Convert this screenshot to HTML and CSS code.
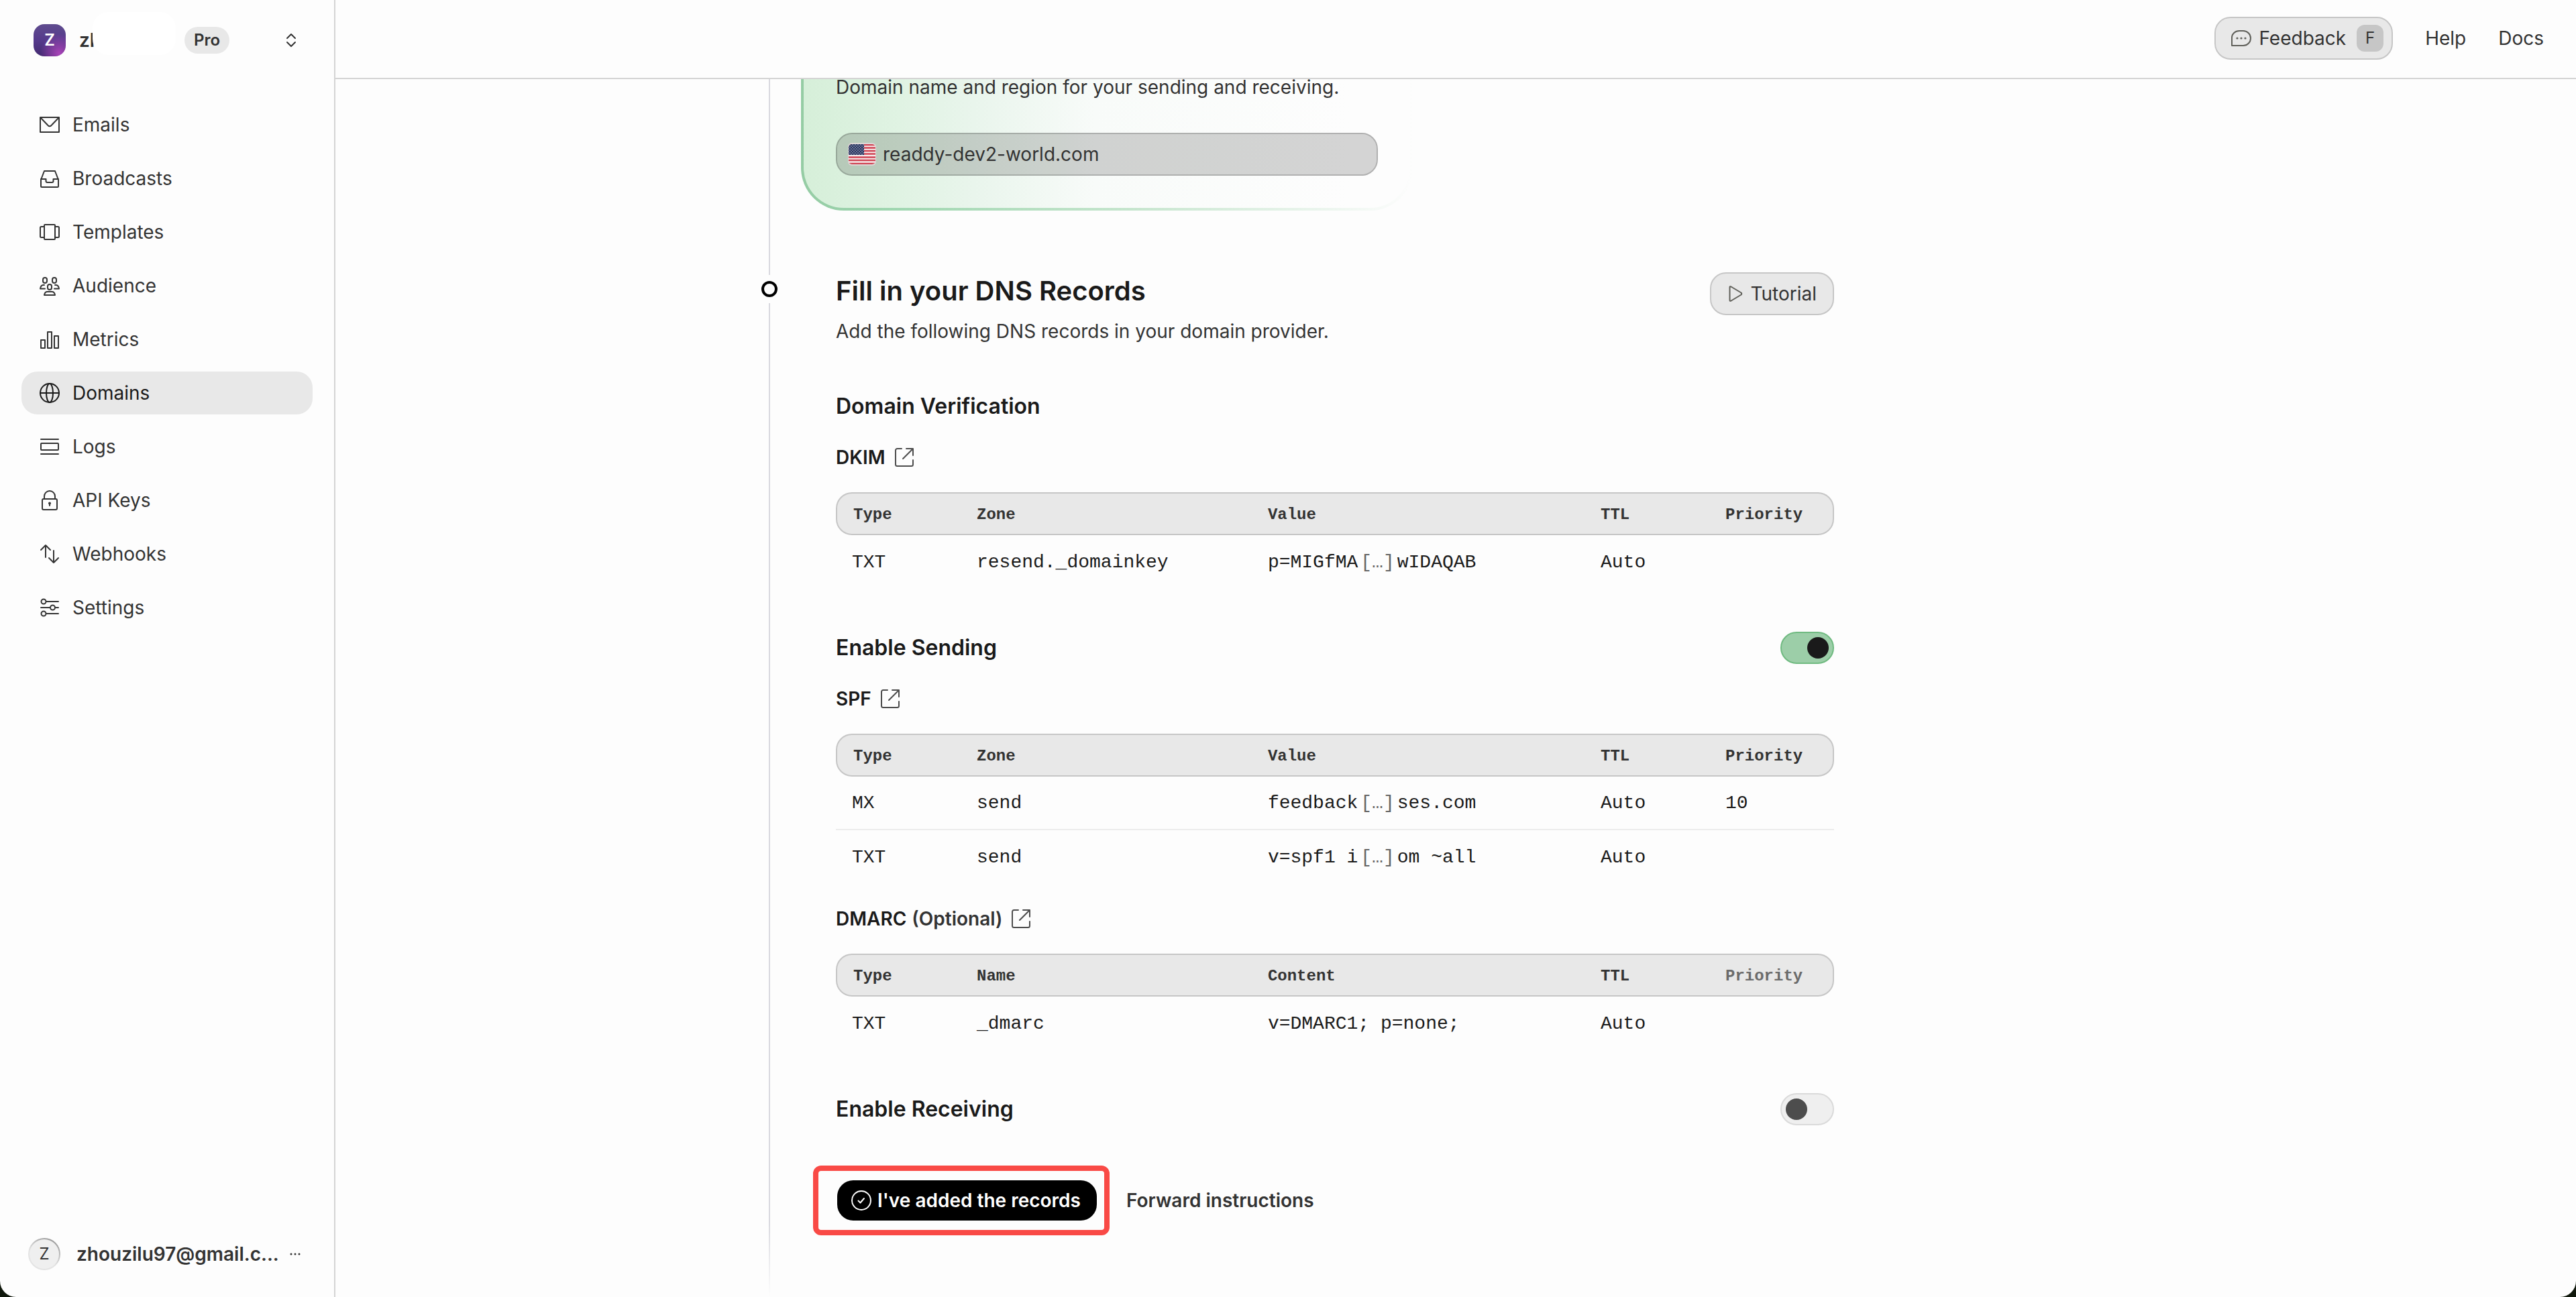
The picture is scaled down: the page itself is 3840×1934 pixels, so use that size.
FILE: index.html
```html
<!DOCTYPE html>
<html lang="en">
<head>
<meta charset="utf-8">
<title>Domains</title>
<link rel="stylesheet" href="styles.css">
</head>
<body>
<svg class="defs" aria-hidden="true">
  <symbol id="external" viewBox="0 0 32 32">
    <path d="M12 3H5.500a2.500 2.500 0 0 0-2.500 2.500v21a2.500 2.500 0 0 0 2.500 2.500h21a2.500 2.500 0 0 0 2.500-2.500V20"/>
    <path d="M19 3h10v10M29 3L14 18"/>
  </symbol>
</svg>
<div class="app">
  <aside class="sidebar">
    <button class="team" type="button">
      <span class="team-avatar">Z</span>
      <span class="team-name">zh<span class="redaction"></span></span>
      <span class="plan">Pro</span>
      <svg class="chevrons" viewBox="0 0 16 24" aria-hidden="true"><path d="M2 9l6-6 6 6M2 15l6 6 6-6"/></svg>
    </button>
    <nav class="nav">
      <a class="nav-item" href="#"><svg class="icon" viewBox="0 0 32 32"><rect x="2" y="5" width="28" height="22"/><path d="M2.500 5.500L13.500 17q2.500 2.500 5 0L29.500 5.500"/></svg>Emails</a>
      <a class="nav-item" href="#"><svg class="icon" viewBox="0 0 32 32"><path d="M8 5h16l5 13v9.500a1.500 1.500 0 0 1-1.500 1.500h-23a1.500 1.500 0 0 1-1.500-1.500V18z"/><path d="M3 17h7.500v3a2 2 0 0 0 2 2h7a2 2 0 0 0 2-2v-3H29"/></svg>Broadcasts</a>
      <a class="nav-item" href="#"><svg class="icon" viewBox="0 0 32 32"><rect x="8" y="5" width="16" height="22" rx="1"/><path d="M8 8H3.500A1.500 1.500 0 0 0 2 9.500v13A1.500 1.500 0 0 0 3.500 24H8M24 8h4.500A1.500 1.500 0 0 1 30 9.500v13a1.500 1.500 0 0 1-1.500 1.500H24"/></svg>Templates</a>
      <a class="nav-item" href="#"><svg class="icon" viewBox="0 0 32 32"><rect x="6" y="4" width="6" height="8" rx="3"/><rect x="20" y="4" width="6" height="8" rx="3"/><rect x="13" y="14" width="6" height="8" rx="3"/><path d="M8 15H6.500C4 15 2.500 17.500 2 20.500h7M24 15h1.500c2.500 0 4 2.500 4.500 5.500h-7M8 30c.5-3 2-5 4.500-5h7c2.500 0 4 2 4.500 5z"/></svg>Audience</a>
      <a class="nav-item" href="#"><svg class="icon" viewBox="0 0 32 32"><rect x="3" y="17" width="6" height="12"/><rect x="13" y="5" width="6" height="24"/><rect x="23" y="11" width="6" height="18"/></svg>Metrics</a>
      <a class="nav-item active" href="#" aria-current="page"><svg class="icon" viewBox="0 0 32 32"><circle cx="16" cy="16" r="14"/><ellipse cx="16" cy="16" rx="5" ry="14"/><path d="M2 16h28"/></svg>Domains</a>
      <a class="nav-item" href="#"><svg class="icon" viewBox="0 0 32 32"><path d="M3 5h26M3 27h26"/><rect x="3" y="11" width="26" height="10" rx="1"/></svg>Logs</a>
      <a class="nav-item" href="#"><svg class="icon" viewBox="0 0 32 32"><rect x="5" y="14" width="22" height="16" rx="2"/><path d="M8 14v-4a8 8 0 0 1 16 0v4M16 20v4"/><circle cx="16" cy="20.500" r="1"/></svg>API Keys</a>
      <a class="nav-item" href="#"><svg class="icon" viewBox="0 0 32 32"><path d="M10 21V3M3 10l7-7 7 7M22 11v18M15 22l7 7 7-7"/></svg>Webhooks</a>
      <a class="nav-item" href="#"><svg class="icon" viewBox="0 0 32 32"><circle cx="7" cy="7" r="3.500"/><circle cx="20.500" cy="16" r="3.500"/><circle cx="7" cy="25" r="3.500"/><path d="M11 7h18M3 16h14M24 16h5M11 25h18"/></svg>Settings</a>
    </nav>
    <button class="account" type="button">
      <span class="account-avatar">Z</span>
      <span class="account-name">zhouzilu97@gmail.c...</span>
      <svg class="dots" viewBox="0 0 16 4" aria-hidden="true"><circle cx="2" cy="2" r="1.500"/><circle cx="8" cy="2" r="1.500"/><circle cx="14" cy="2" r="1.500"/></svg>
    </button>
  </aside>

  <div class="page">
    <header class="topbar">
      <button class="btn feedback" type="button">
        <svg class="icon muted" viewBox="0 0 32 32"><path d="M2 27V15A11 10 0 0 1 13 5h6a11 11 0 0 1 0 22z"/><g class="fill"><circle cx="10" cy="16" r="1.600"/><circle cx="16" cy="16" r="1.600"/><circle cx="22" cy="16" r="1.600"/></g></svg>
        Feedback <kbd class="key">F</kbd>
      </button>
      <a class="top-link" href="#">Help</a>
      <a class="top-link" href="#">Docs</a>
    </header>

    <main class="steps">
      <section class="domain-card">
        <p class="text card-text">Domain name and region for your sending and receiving.</p>
        <div class="domain-field">
          <svg class="flag" viewBox="0 0 42 34" aria-label="United States">
            <defs>
              <clipPath id="flag-shape"><rect x="1" y="2" width="40" height="30" rx="5"/></clipPath>
              <pattern id="stars" width="4" height="4" patternUnits="userSpaceOnUse"><circle cx="1" cy="1" r=".7" fill="#dfe3ef"/><circle cx="3" cy="3" r=".7" fill="#dfe3ef"/></pattern>
            </defs>
            <rect width="42" height="34" rx="6" fill="#dcd6d5"/>
            <g clip-path="url(#flag-shape)">
              <rect width="42" height="34" fill="#f7eeee"/>
              <path d="M0 3h42M0 7.500h42M0 12h42M0 16.500h42M0 21.500h42M0 26h42M0 31h42" stroke="#cf4353" stroke-width="2.300"/>
              <rect x="1" y="2" width="23" height="16" fill="#27335f"/>
              <rect x="1" y="2" width="23" height="16" fill="url(#stars)"/>
            </g>
          </svg>
          <span>readdy-dev2-world.com</span>
        </div>
      </section>

      <section class="records">
        <span class="marker"></span>
        <div class="records-head">
          <div>
            <h2 class="title">Fill in your DNS Records</h2>
            <p class="text">Add the following DNS records in your domain provider.</p>
          </div>
          <button class="btn tutorial" type="button"><svg class="icon muted" viewBox="0 0 32 32"><path d="M7.500 6.500v19q0 2 2 1l15-9q1.500-1.500 0-3l-15-9q-2-1-2 1z"/></svg>Tutorial</button>
        </div>

        <div class="group-head group-first"><h3 class="group-title">Domain Verification</h3></div>
        <h4 class="record-title">DKIM <a href="#" aria-label="About DKIM"><svg class="ext"><use href="#external"/></svg></a></h4>
        <table class="table">
          <thead><tr><th>Type</th><th>Zone</th><th>Value</th><th>TTL</th><th>Priority</th></tr></thead>
          <tbody>
            <tr><td>TXT</td><td>resend._domainkey</td><td>p=MIGfMA<span class="cut">[…]</span>wIDAQAB</td><td>Auto</td><td></td></tr>
          </tbody>
        </table>

        <div class="group-head"><h3 class="group-title"><label for="sending">Enable Sending</label></h3><input class="switch" id="sending" type="checkbox" role="switch" checked></div>
        <h4 class="record-title">SPF <a href="#" aria-label="About SPF"><svg class="ext"><use href="#external"/></svg></a></h4>
        <table class="table">
          <thead><tr><th>Type</th><th>Zone</th><th>Value</th><th>TTL</th><th>Priority</th></tr></thead>
          <tbody>
            <tr><td>MX</td><td>send</td><td>feedback<span class="cut">[…]</span>ses.com</td><td>Auto</td><td>10</td></tr>
            <tr><td>TXT</td><td>send</td><td>v=spf1 i<span class="cut">[…]</span>om ~all</td><td>Auto</td><td></td></tr>
          </tbody>
        </table>
        <h4 class="record-title">DMARC <span class="optional">(Optional)</span> <a href="#" aria-label="About DMARC"><svg class="ext"><use href="#external"/></svg></a></h4>
        <table class="table">
          <thead><tr><th>Type</th><th>Name</th><th>Content</th><th>TTL</th><th class="faint">Priority</th></tr></thead>
          <tbody>
            <tr><td>TXT</td><td>_dmarc</td><td>v=DMARC1; p=none;</td><td>Auto</td><td></td></tr>
          </tbody>
        </table>

        <div class="group-head"><h3 class="group-title"><label for="receiving">Enable Receiving</label></h3><input class="switch" id="receiving" type="checkbox" role="switch"></div>

        <div class="actions">
          <div class="primary-wrap">
            <button class="primary" type="button"><svg class="icon" viewBox="0 0 32 32"><circle cx="16" cy="16" r="14"/><path d="M11.500 16.500l3 3 5.500-6.500"/></svg>I've added the records</button>
            <span class="highlight"></span>
          </div>
          <button class="plain" type="button">Forward instructions</button>
        </div>
      </section>
    </main>
  </div>
</div>
</body>
</html>
```

FILE: styles.css
```css
*, *::before, *::after { box-sizing: border-box; }

body {
  margin: 0;
  background: #10180c;
  color: #333;
  font: 400 28px/40px Inter, "Liberation Sans", sans-serif;
}

h2, h3, h4, p { margin: 0; }
a { color: inherit; text-decoration: none; }
button { margin: 0; font: inherit; color: inherit; background: none; border: 0; padding: 0; }
svg { flex: none; fill: none; stroke: currentColor; stroke-width: 2; stroke-linecap: round; stroke-linejoin: round; }
.defs { position: absolute; width: 0; height: 0; }

.icon { width: 32px; height: 32px; }
.icon .fill { fill: currentColor; stroke: none; }
.muted { color: #60605a; }

.app {
  display: grid;
  grid-template-columns: 500px 1fr;
  min-height: 100vh;
  background: #fdfdfd;
  border-radius: 0 0 24px 24px;
  overflow: hidden;
}

/* Sidebar */
.sidebar { display: flex; flex-direction: column; border-right: 2px solid #d4d4d4; }

.team { display: flex; align-items: center; height: 120px; padding: 0 56px 0 50px; font-weight: 600; }
.team-avatar {
  display: grid; place-items: center;
  width: 48px; height: 48px; margin-right: 20px;
  border-radius: 16px;
  color: #fff; font-size: 24px;
  background: radial-gradient(circle at 80% 90%, #a843b8 0, rgba(168, 67, 184, 0) 50%), linear-gradient(#5f4c8e, #553a8c 50%, #432a70);
}
.team-name { position: relative; width: 157px; text-align: left; }
.redaction { position: absolute; left: 20px; top: -22px; width: 124px; height: 64px; border-radius: 24px; background: #fff; }
.plan { padding: 0 14px; border-radius: 20px; background: #e8e8e8; font-size: 24px; }
.chevrons { width: 16px; height: 24px; margin-left: auto; }

.nav { display: flex; flex-direction: column; gap: 16px; padding: 34px 32px; }
.nav-item { display: flex; align-items: center; gap: 18px; height: 64px; padding: 0 26px; border-radius: 24px; }
.nav-item.active { background: #e8e8e8; color: #1a1a1a; }

.account { display: flex; align-items: center; margin-top: auto; height: 128px; padding: 0 50px 0 42px; font-weight: 600; }
.account-avatar {
  display: grid; place-items: center;
  width: 48px; height: 48px; margin-right: 24px;
  border-radius: 50%;
  background: linear-gradient(#efefef, #efefef) padding-box, linear-gradient(210deg, #888, #e4e4e4 60%) border-box;
  border: 2px solid transparent;
  font-size: 24px; font-weight: 400;
}
.dots { width: 16px; height: 4px; margin-left: auto; fill: currentColor; stroke: none; }

/* Top bar */
.page { display: flex; flex-direction: column; min-width: 0; }
.topbar {
  display: flex; align-items: center; justify-content: flex-end; gap: 48px;
  height: 118px; padding: 0 48px 2px 0;
  border-bottom: 2px solid #d4d4d4;
}
.btn {
  display: flex; align-items: center; gap: 10px;
  height: 64px; padding: 0 22px;
  border: 2px solid #c6c6c6; border-radius: 24px;
  background: #e8e8e8;
}
.feedback { padding-right: 12px; }
.tutorial { gap: 6px; padding: 0 24px 0 20px; }
.key {
  display: grid; place-items: center;
  width: 40px; height: 40px; margin-left: 6px;
  border-radius: 12px;
  background: #c6c6c6;
  font: 24px/40px Inter, "Liberation Sans", sans-serif;
}

/* Steps, with the rail running down the left edge */
.steps {
  flex: 1;
  width: 100%; max-width: 2048px;
  margin: 0 auto;
  padding-left: 100px;
  background: linear-gradient(#d9d9df calc(100% - 110px), #fdfdfd) left top / 2px 100% no-repeat;
}
.text { line-height: 40px; }

.domain-card {
  width: 912px; margin-left: -52px; padding: 0 48px 48px;
  border: 4px solid transparent; border-top: 0;
  border-radius: 0 0 64px 64px;
  background:
    linear-gradient(90deg, #d6efd9, #e0f3e3 16%, #e9f5ec 28%, #f8fbf9 48%, #fdfdfd 90%) padding-box,
    linear-gradient(90deg, #95cca4, #9ed6af 14%, #c5e5cd 54%, #fdfdfd) border-box;
}
.card-text { line-height: 24px; }
.domain-field {
  display: flex; align-items: center; gap: 10px;
  height: 64px; margin-top: 56px; padding: 0 16px;
  border: 2px solid rgba(0, 0, 0, .3); border-radius: 24px;
  background: rgba(0, 0, 0, .16) padding-box;
}
.flag { width: 42px; height: 34px; stroke: none; }

.records { position: relative; width: 1488px; padding-top: 92px; }
.marker {
  position: absolute; left: -120px; top: 96px;
  width: 42px; height: 42px;
  background: #fdfdfd;
  display: grid; place-items: center;
}
.marker::before { content: ""; width: 24px; height: 24px; border: 4px solid #000; border-radius: 50%; }

.records-head { display: flex; justify-content: space-between; align-items: flex-start; }
.title { margin-bottom: 12px; color: #1a1a1a; font-size: 40px; font-weight: 600; line-height: 56px; }
.group-head { display: flex; justify-content: space-between; align-items: center; height: 48px; margin-top: 64px; }
.group-first { margin-top: 68px; }
.group-title { color: #1a1a1a; font-size: 32px; font-weight: 600; line-height: 48px; }
.record-title { display: flex; align-items: center; gap: 8px; margin: 32px 0; color: #1a1a1a; font-size: 28px; font-weight: 600; }
.record-title a { display: flex; color: #4d4d4d; margin-left: 4px; }
.optional { color: #333; }
.ext { width: 32px; height: 32px; }

.table {
  width: 100%; table-layout: fixed;
  border-collapse: separate; border-spacing: 0;
  font-family: "Liberation Mono", monospace;
  color: #1a1a1a;
}
.table th, .table td { padding: 2px 24px 0; text-align: left; white-space: pre; }
.table th {
  height: 64px; padding-top: 4px;
  border: solid #c6c6c6; border-width: 2px 0;
  background: #e8e8e8;
  color: #333; font-size: 24px; font-weight: 700;
}
.table th:nth-child(1) { width: 12.5%; }
.table th:nth-child(2) { width: 29.16%; }
.table th:nth-child(3) { width: 33.34%; }
.table th:nth-child(4), .table th:nth-child(5) { width: 12.5%; }
.table th:first-child { border-left-width: 2px; border-radius: 24px 0 0 24px; }
.table th:last-child { border-right-width: 2px; border-radius: 0 24px 24px 0; }
.table .faint { color: #6b6b6b; }
.table td { height: 80px; }
.table tbody tr:not(:last-child) td { border-bottom: 2px solid #ececec; }
.cut { margin: 0 4px; color: #666; }

.switch {
  appearance: none;
  display: flex; align-items: center;
  width: 80px; height: 48px; margin: 0; padding: 0 6px;
  border: 2px solid #dadada; border-radius: 24px;
  background: #efefef;
}
.switch::before { content: ""; width: 32px; height: 32px; border-radius: 50%; background: #4d4d4d; }
.switch:checked { justify-content: flex-end; border-color: #6fba80; background: #9ccea8; }
.switch:checked::before { background: #1a1a1a; }

.actions { display: flex; align-items: center; gap: 44px; margin-top: 82px; font-weight: 600; }
.primary-wrap { position: relative; margin-left: 2px; }
.primary { display: flex; align-items: center; gap: 8px; height: 60px; padding: 0 24px 0 20px; border-radius: 24px; background: #000; color: #fff; }
.highlight { position: absolute; inset: -22px -19px -22px -36px; border: 8px solid #f94a46; border-radius: 12px; pointer-events: none; }
```
